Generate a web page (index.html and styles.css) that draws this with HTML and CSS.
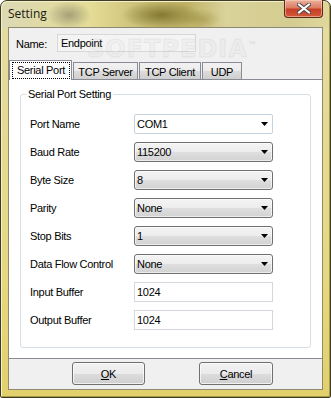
FILE: index.html
```html
<!DOCTYPE html>
<html lang="en">
  <head>
    <meta charset="UTF-8" />
    <title>Setting</title>
    <link rel="stylesheet" href="styles.css">
  </head>
  <body>
    <!-- window frame -->
    <div class="window">
      <div class="titlebar">
        <span class="title">Setting</span>
        <div class="close">
          <svg width="14" height="11" viewBox="0 0 14 11">
            <path d="M2 1.5 L12 9.5 M12 1.5 L2 9.5" stroke="#4a4a4a" stroke-width="4" stroke-linecap="square" />
            <path d="M2 1.5 L12 9.5 M12 1.5 L2 9.5" stroke="#ffffff" stroke-width="2" stroke-linecap="square" />
          </svg>
        </div>
      </div>

      <div class="client">
        <div class="name-row">
          <label class="name-label">Name:</label>
          <div class="name-input">Endpoint</div>
        </div>

        <div class="tabs">
          <div class="tab tab-active"><span class="focus">Serial Port</span></div>
          <div class="tab tab-server">TCP Server</div>
          <div class="tab tab-client">TCP Client</div>
          <div class="tab tab-udp">UDP</div>
        </div>

        <div class="tab-page">
          <div class="group">
            <span class="group-title">Serial Port Setting</span>

            <div class="form-row">
              <label class="row-label">Port Name</label>
              <div class="combo combo-edit">COM1<i class="arrow"></i></div>
            </div>
            <div class="form-row">
              <label class="row-label">Baud Rate</label>
              <div class="combo">115200<i class="arrow"></i></div>
            </div>
            <div class="form-row">
              <label class="row-label">Byte Size</label>
              <div class="combo">8<i class="arrow"></i></div>
            </div>
            <div class="form-row">
              <label class="row-label">Parity</label>
              <div class="combo">None<i class="arrow"></i></div>
            </div>
            <div class="form-row">
              <label class="row-label">Stop Bits</label>
              <div class="combo">1<i class="arrow"></i></div>
            </div>
            <div class="form-row">
              <label class="row-label">Data Flow Control</label>
              <div class="combo">None<i class="arrow"></i></div>
            </div>
            <div class="form-row">
              <label class="row-label">Input Buffer</label>
              <div class="text-box">1024</div>
            </div>
            <div class="form-row">
              <label class="row-label">Output Buffer</label>
              <div class="text-box">1024</div>
            </div>
          </div>
        </div>

        <div class="buttons">
          <div class="btn btn-ok"><u>O</u>K</div>
          <div class="btn btn-cancel"><u>C</u>ancel</div>
        </div>
      </div>

      <div class="watermark">SOFTPEDIA<sup>™</sup></div>
    </div>
  </body>
</html>
```

FILE: styles.css
```css
body {
  margin: 0;
  font-family: "Liberation Sans", Arial, sans-serif;
  font-size: 11px;
  letter-spacing: -0.3px;
  color: #000;
}

.window {
  position: relative;
  width: 331px;
  height: 398px;
  box-sizing: border-box;
  border: 1px solid #3e3b26;
  border-radius: 7px 7px 2px 2px;
  padding: 0 7px 7px 7px;
  background:
    radial-gradient(ellipse 40px 14px at 160px 14px, rgba(110, 98, 30, 0.75), transparent),
    radial-gradient(ellipse 22px 14px at 68px 14px, rgba(140, 136, 105, 0.7), transparent),
    radial-gradient(ellipse 20px 10px at 200px 18px, rgba(150, 135, 60, 0.5), transparent),
    linear-gradient(to right, #dcd8b4 0, #e4dc96 90px, #cdc27a 135px, #bfb264 185px, #d9d29a 225px, #d4cc90 290px, #e0d89c 331px) top / 100% 27px no-repeat,
    linear-gradient(to bottom, #e4dca4, #e6d880 70%, #e2d06c);
  box-shadow: inset 1px 1px 0 #f6f0c8, inset -1px -1px 0 #a89a4c;
}

.titlebar {
  height: 26px;
  display: flex;
  align-items: flex-start;
  justify-content: space-between;
}

.title {
  font-family: "Open Sans", "Noto Sans", sans-serif;
  font-size: 12px;
  letter-spacing: 0;
  line-height: 26px;
  color: #1a1a10;
}

.close {
  width: 39px;
  height: 18px;
  margin-top: -1px;
  box-sizing: border-box;
  border: 1px solid #5b2a1c;
  border-top: 0;
  border-radius: 0 0 4px 4px;
  background: linear-gradient(to bottom, #ecb09c 0, #dc7e62 45%, #c63e26 55%, #d45a38 100%);
  box-shadow: inset 0 0 0 1px rgba(255, 220, 200, 0.5);
  display: flex;
  align-items: center;
  justify-content: center;
}

.client {
  height: 363px;
  box-sizing: border-box;
  border: 1px solid #8d8a70;
  background: #f0f0f0;
  display: flex;
  flex-direction: column;
}

.name-row {
  height: 32px;
  display: flex;
  align-items: flex-start;
}

.name-label {
  margin: 10px 0 0 7px;
  width: 41px;
}

.name-input {
  margin-top: 6px;
  width: 139px;
  height: 18px;
  box-sizing: border-box;
  border: 1px solid #d7d7d7;
  background: #f4f4f4;
  padding: 2px 0 0 3px;
}

.tabs {
  height: 20px;
  display: flex;
  align-items: flex-end;
  margin-bottom: -1px;
  position: relative;
  z-index: 1;
}

.tab {
  height: 18px;
  box-sizing: border-box;
  border: 1px solid #898c95;
  margin-right: 1px;
  background: linear-gradient(to bottom, #f2f2f2 0, #ebebeb 50%, #dddddd 50%, #cfcfcf 100%);
  display: flex;
  align-items: center;
  justify-content: center;
  padding-top: 1px;
}

.tab-active {
  width: 63px;
  height: 20px;
  border-bottom: 0;
  background: #fff;
  padding: 0 1px 1px 2px;
}

.focus {
  flex: 1;
  height: 17px;
  box-sizing: border-box;
  border: 1px dotted #000;
  display: flex;
  align-items: center;
  justify-content: center;
}

.tab-server {
  width: 65px;
}

.tab-client {
  width: 62px;
}

.tab-udp {
  width: 40px;
}

.tab-page {
  height: 280px;
  box-sizing: border-box;
  border-top: 1px solid #898c95;
  border-bottom: 1px solid #898c95;
  background: #fff;
  padding-top: 14px;
}

.group {
  position: relative;
  margin-left: 11px;
  width: 291px;
  height: 254px;
  box-sizing: border-box;
  border: 1px solid #d5dfe5;
  border-radius: 3px;
  padding: 19px 0 0 9px;
  display: flex;
  flex-direction: column;
  gap: 8px;
}

.group-title {
  position: absolute;
  left: 5px;
  top: -7px;
  padding: 0 2px;
  background: #fff;
  line-height: 13px;
}

.form-row {
  display: flex;
  align-items: center;
  height: 20px;
}

.row-label {
  width: 104px;
}

.combo {
  width: 139px;
  height: 20px;
  box-sizing: border-box;
  border: 1px solid #707070;
  border-radius: 3px;
  background: linear-gradient(to bottom, #f4f4f4 0, #ececec 50%, #dfdfdf 50%, #d2d2d2 100%);
  box-shadow: inset 0 0 0 1px rgba(255, 255, 255, 0.6);
  display: flex;
  align-items: center;
  justify-content: space-between;
  padding: 0 4px 0 2px;
}

.combo-edit {
  border-color: #c5d2df;
  border-radius: 2px;
  background: #fff;
  box-shadow: none;
}

.arrow {
  width: 7px;
  height: 4px;
  background: #000;
  clip-path: polygon(0 0, 100% 0, 50% 100%);
}

.text-box {
  width: 139px;
  height: 20px;
  box-sizing: border-box;
  border: 1px solid #d2d8de;
  background: #fff;
  padding: 3px 0 0 2px;
}

.buttons {
  flex: 1;
  display: flex;
  align-items: flex-start;
  padding-top: 3px;
}

.btn {
  height: 23px;
  box-sizing: border-box;
  border: 1px solid #707070;
  border-radius: 3px;
  background: linear-gradient(to bottom, #f2f2f2 0, #ebebeb 50%, #dddddd 50%, #cfcfcf 100%);
  box-shadow: inset 0 0 0 1px rgba(255, 255, 255, 0.7);
  display: flex;
  align-items: center;
  justify-content: center;
}

.btn-ok {
  width: 73px;
  margin-left: 63px;
}

.btn-cancel {
  width: 74px;
  margin-left: 54px;
}

/* faint watermark over the dialog */
.watermark {
  position: absolute;
  left: 86px;
  top: 34px;
  font-family: "DejaVu Sans", sans-serif;
  font-size: 24px;
  font-weight: bold;
  letter-spacing: 1px;
  color: rgba(200, 200, 200, 0.1);
  -webkit-text-stroke: 1px rgba(170, 170, 170, 0.16);
  pointer-events: none;
}

.watermark sup {
  font-size: 9px;
  font-weight: normal;
}
```
